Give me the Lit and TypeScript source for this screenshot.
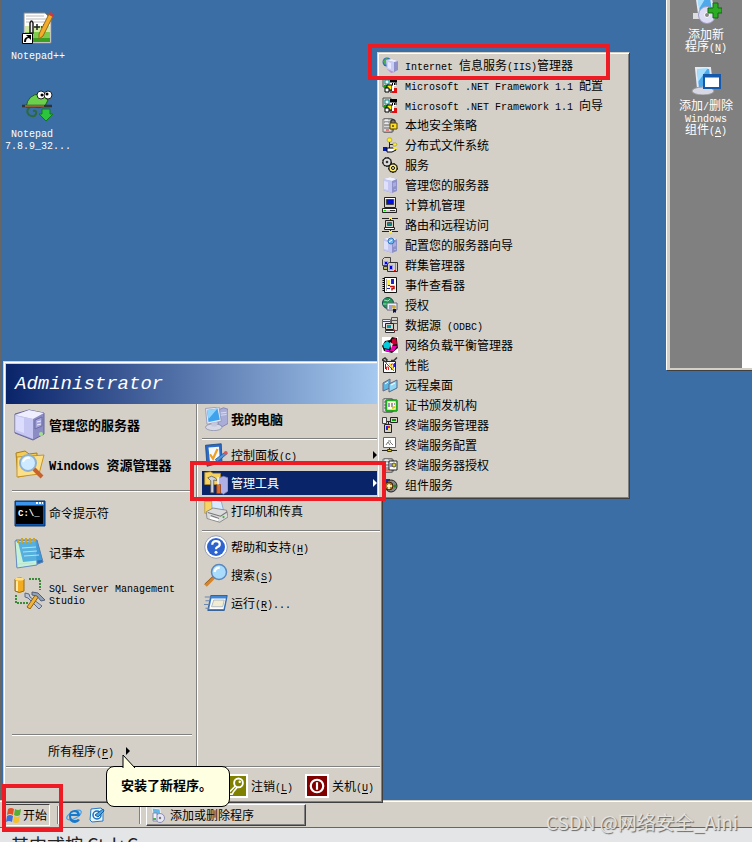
import { LitElement, html, svg, css, nothing, TemplateResult, SVGTemplateResult } from "lit";
import { customElement, property } from "lit/decorators.js";

/** Latin runs are set smaller than Chinese ones; "&" marks the underlined shortcut letter. */
function mixed(text: string): TemplateResult[] {
  return text.split(/([\x20-\x7e]+)/).filter(Boolean).map((run) => {
    if (!/^[\x20-\x7e]+$/.test(run)) return html`${run}`;
    const [head, tail] = run.split("&");
    return tail === undefined
      ? html`<span class="latin">${run}</span>`
      : html`<span class="latin">${head}<u>${tail[0]}</u>${tail.slice(1)}</span>`;
  });
}

const textStyles = css`
  .latin { font-family: "Liberation Mono", monospace; font-size: var(--latin, 10px); line-height: 0; white-space: pre; }
  u { text-decoration: underline; text-underline-offset: 2px; }
  button {
    font: inherit; color: inherit; background: none; border: 0; margin: 0; padding: 0;
    text-align: left; display: flex; align-items: center;
  }
  svg { display: block; flex: none; }
`;

type Art = SVGTemplateResult;

const tower = svg`
  <path d="M1 2 8 0l7 2v12l-5 2-9-3z" fill="#8f92c8"/>
  <path d="M1 2 10 4v12L1 13Z" fill="#c3c6f0"/><path d="M1 2 8 0l7 2-5 2Z" fill="#eef0ff"/>
  <path d="M2 4l4 1v8l-4-1z" fill="#dfe1fb"/><path d="M11 6l3-1v4l-3 1z" fill="#a9ace0"/><path d="M12 12h2v1h-2z" fill="#8fd08f"/>`;

const framework = svg`
  <path d="M1 1h8v9h-8z" fill="#d4d0c8" stroke="#555"/><path d="M3 3h4v4h-4z" fill="#eff" stroke="#088"/>
  <path d="M8 2h7v3h-7z" fill="#000"/><path d="M8 5h6v4h-6z" fill="#fff"/><path d="M8 5h6v3" fill="none" stroke="#000"/><path d="M10 6h1v2h-1zM12 6h1v2h-1z" fill="#000"/>
  <path d="M2 8h3v3h-3z" fill="#0a0"/><path d="M5 8h5v5h-5z" fill="#fe0" stroke="#000"/>
  <path d="M10 11h5v5h-5z" fill="#d11"/><path d="M3 11h4v4h-4z" fill="#fff" stroke="#000"/><path d="M10 9h2v5h-2z" fill="#fff"/><path d="M9 13v3" stroke="#000"/>`;

const cabinet = svg`
  <path d="M2 1h8l2 2v11l-2 2h-8z" fill="#777"/><path d="M1 2h9v13h-9z" fill="#d8d8d8" stroke="#777"/>
  <path d="M2 5h7M2 8h7M2 11h7" stroke="#666"/><path d="M3 3h3M3 6h3" stroke="#fff"/><path d="M4 13h3" stroke="#e22"/>`;

const small: Record<string, Art> = {
  iis: svg`<circle cx="5" cy="5" r="4.500" fill="#2765c8"/><path d="M1 4l3-3 3 1-2 3-1 3-2-1z" fill="#4caf50"/><path d="M5 12l4 4 4-1-3-4z" fill="#c58ad8"/><path d="M4 3l6-1 6 2v9l-4 2-7-3z" fill="#8f92c8"/><path d="M4 3l8 2v10l-7-3z" fill="#c9ccf4"/><path d="M4 3l6-1 6 2-4 1z" fill="#eef0ff"/><path d="M6 5l3 1v6l-3-1z" fill="#e6e8ff"/>`,
  net: framework,
  lock: svg`${cabinet}<path d="M9 6V4q2-3 4 0v2" fill="none" stroke="#333" stroke-width="1.500"/><path d="M8 6h7v6h-7z" fill="#fd2" stroke="#554400"/><path d="M11 8v2" stroke="#000"/>`,
  dfs: svg`<path d="M7.500 4v9M8 7.500h4M8 11.500h4" fill="none" stroke="#222"/><path d="M6 1h3l1 2-1 2H6L5 3zM11 6h3l1 1-1 2h-3z" fill="#fe3" stroke="#880" stroke-width=".5"/><path d="M1 10h4v4h-4z" fill="#0018b8"/><path d="M5 11h8l1 2-4 2H5z" fill="#fff" stroke="#000"/><path d="M11 10h3l1 2-3 1z" fill="#fe3"/>`,
  gears: svg`<circle cx="5" cy="5" r="4.500" fill="#111" stroke="#111" stroke-dasharray="2 1"/><circle cx="5" cy="5" r="3.500" fill="#ddd"/><circle cx="5" cy="5" r="1.300" fill="#333"/><circle cx="11" cy="11" r="4.500" fill="#111" stroke="#111" stroke-dasharray="2 1"/><circle cx="11" cy="11" r="3.500" fill="#fe6"/><circle cx="11" cy="11" r="1.500" fill="#fff" stroke="#000"/>`,
  server: tower,
  computer: svg`<path d="M2.500 0.500h11v10h-11z" fill="#d4d0c8" stroke="#222"/><path d="M3 1.500h10" stroke="#fff"/><path d="M4.500 2.500h7v5h-7z" fill="#0010d8" stroke="#444"/><path d="M0.500 11.500h14v4h-14z" fill="#d4d0c8" stroke="#222"/><path d="M1 12.500h13" stroke="#fff"/><path d="M2 13.500h2" stroke="#0d0"/><path d="M8 13.500h5" stroke="#333"/>`,
  routing: svg`<path d="M0 1.500h16M0 14.500h16M8.500 0v4M8.500 11v4" stroke="#222"/><path d="M7 0h3v2h-3zM7 14h3v2h-3z" fill="#fe3"/><path d="M3.500 3.500h8v7h-8z" fill="#d4d0c8" stroke="#222"/><path d="M5.500 5.500h4v3h-4z" fill="#088" stroke="#555"/><path d="M2.500 10.500h10v2h-10z" fill="#fff" stroke="#222"/>`,
  configure: svg`${tower}<circle cx="9" cy="4" r="3" fill="#6fb6ee" stroke="#3a76bb"/><path d="M7 5l3-2" stroke="#fff"/>`,
  cluster: svg`<path d="M0.500 2.500l2-2h6v8h-8z" fill="#d4d0c8" stroke="#444"/><path d="M2.500 4.500h3v3h-3z" fill="#00d" stroke="#99f"/><path d="M1.500 9.500h6v3h-6z" fill="#bb6" stroke="#333"/><path d="M5.500 6.500l2-1h8v9h-10z" fill="#d4d0c8" stroke="#333"/><path d="M7.500 8.500h3v4h-3z" fill="#00d" stroke="#99f"/><path d="M13.500 6v8" stroke="#888"/><path d="M12 13.500h2" stroke="#e11"/>`,
  events: svg`<path d="M2.500 0.500h12v15h-12z" fill="#fff" stroke="#111"/><path d="M1.500 1v14" stroke="#000" stroke-width="2" stroke-dasharray="1 1"/><path d="M4.500 2v12" stroke="#aaa"/><path d="M5 3h3v6h-3z" fill="#fe3"/><path d="M9 2h3v5h-3z" fill="#22c"/><path d="M8 9.500h4v2h-2v2" fill="none" stroke="#b11" stroke-width="1.500"/><path d="M5 11.500h3M6 8.500h2" stroke="#22c"/>`,
  license: svg`<circle cx="6" cy="6" r="5.500" fill="#1c9b50" stroke="#145"/><path d="M2 3l4 1 2-2M1 7h5l3 3" stroke="#9fe0c0" fill="none"/><path d="M5 6h10v7h-10z" fill="#eef" stroke="#667"/><path d="M7 9h4M7 11h3" stroke="#55a"/><circle cx="12" cy="10" r="2" fill="#ca3"/><path d="M11 12h3v4l-1-1-2 1z" fill="#115"/>`,
  odbc: svg`<path d="M0.500 2.500h8v8h-8z" fill="#eef" stroke="#666"/><path d="M1 4.500h7" stroke="#24c"/><path d="M9.500 0.500h6v13h-6z" fill="#d4d0c8" stroke="#555"/><path d="M10 3.500h5M10 6.500h5" stroke="#555"/><path d="M3.500 6.500h8v6h-8z" fill="#d4d0c8" stroke="#222"/><path d="M5 8h4v3h-4z" fill="#09a"/><path d="M3.500 13.500h9v2h-9z" fill="#fff" stroke="#333"/><path d="M11 13h2" stroke="#e11"/>`,
  nlb: svg`<path d="M0 0h16v16h-16z" fill="#fff"/><path d="M3 4l5-1 2-3 5 1 1 10-6 5-8-2-2-5z" fill="#111"/><path d="M1 7l4-3 4 3-2 5-5-1z" fill="#0cd"/><path d="M10 2l4-1 1 6-5 1z" fill="#c03"/><path d="M10 9h5l-3 5-4 0z" fill="#e0a"/><path d="M8 5l3 2-2 5z" fill="#ddd"/><path d="M3 12l4 1 1 2-5-1z" fill="#f0e"/>`,
  perf: svg`<path d="M1.500 4.500h12v11h-12z" fill="#fff" stroke="#222"/><path d="M0 3l3-2 2 2-1 2zM9 3.500h3l3-3" fill="none" stroke="#333" stroke-width="1.500"/><path d="M4.500 13v-3h2v3M9.500 13V7h2v6" stroke="#e22" fill="none"/><path d="M4 6l8 8" stroke="#111" stroke-width=".7"/><path d="M7 6l5 7" stroke="#fd0" stroke-width="1.500"/><path d="M3.500 12V7M12.500 10V6" stroke="#22d"/>`,
  remote: svg`<path d="M1 6l7-4v9l-7 3z" fill="#5cb6e0" stroke="#668"/><path d="M7 7l8-4v8l-8 4z" fill="#8fd6f4" stroke="#568"/><path d="M3 7l3-2M9 8l4-2" stroke="#fff"/>`,
  ca: svg`${cabinet}<path d="M4 3h11v11h-11z" fill="#ffd" stroke="#151"/><path d="M4.500 3.500h10v10h-10z" fill="none" stroke="#2a2" stroke-width="1.500"/><path d="M6 7h7M6 9h6" stroke="#33a" stroke-dasharray="2 1"/><path d="M10 11l3-1" stroke="#dc0" stroke-width="2"/>`,
  tsmanager: svg`<path d="M0.500 0.500h4v6h-4z" fill="#eee" stroke="#444"/><path d="M8.500 0.500h7v5h-7z" fill="#d4d0c8" stroke="#222"/><path d="M10 2h4v2h-4z" fill="#090"/><path d="M5 4.500h3M6.500 5v4" stroke="#222" fill="none"/><path d="M2.500 7.500h7v8h-7z" fill="#d4d0c8" stroke="#222"/><path d="M4 9h2v4h-2z" fill="#22d"/><path d="M6 9h2v2h-2z" fill="#e22"/><path d="M6 11h2v2h-2z" fill="#fe0"/>`,
  tsconfig: svg`<path d="M1.500 0.500h12v10h-12z" fill="#fff" stroke="#666"/><path d="M4 8l2-3 2 3M8 5l3 3M6 4h3" stroke="#777" fill="none"/><path d="M0 13.500h15M7.500 11v2" stroke="#222"/><path d="M5.500 12.500h4v2h-4z" fill="#dc3" stroke="#333"/>`,
  tslicense: svg`${cabinet}<path d="M7 4h8v9h-8z" fill="#fff" stroke="#222"/><path d="M8 7h3M8 9h3" stroke="#22a"/><circle cx="12" cy="8" r="2" fill="#dc3" stroke="#553"/>`,
  com: svg`<path d="M2 2h6v5h-6z" fill="#22b"/><circle cx="9" cy="9" r="6" fill="#888" stroke="#222"/><circle cx="7" cy="9" r="4" fill="#a72" stroke="#420"/><path d="M5 9h5M7 7v5" stroke="#ffd" stroke-width="1.500"/><circle cx="13" cy="9" r="1.500" fill="#282"/>`,
  flag: svg`<path d="M2 2q3-2 6 0L7 8Q4 6 1 8z" fill="#e2502a"/><path d="M9 2q3 2 6 0l-1 6q-3 2-6 0z" fill="#58ad35"/><path d="M1 9q3-2 6 0l-1 6q-3-2-6 0z" fill="#3f6fd8"/><path d="M8 9q3 2 6 0l-1 6q-3 2-6 0z" fill="#f4c02c"/>`,
  ie: svg`<ellipse cx="8" cy="8" rx="8" ry="3.500" transform="rotate(-28 8 8)" fill="none" stroke="#4aa0e8" stroke-width="1.200"/><path d="M14 9H5q0 4 4 4 2 0 3-1l2 1q-2 3-5 3-6 0-6-7 0-6 6-6 5 0 5 6zM5 7h6q0-2-3-2t-3 2z" fill="#1878cc"/>`,
  mail: svg`<path d="M2 2l10-1 2 2v11l-11 1-2-2z" fill="#e8f4ff" stroke="#2878c0"/><circle cx="8" cy="8" r="4" fill="none" stroke="#1870c4" stroke-width="1.500"/><path d="M6 8l3 2 6-6-1-2z" fill="#48a4e8" stroke="#14609c"/>`,
  addremove: svg`<path d="M2 1l8 1 1 7-7 2z" fill="#5fb8ec" stroke="#eee"/><circle cx="10" cy="11" r="4.500" fill="#e6e6f6" stroke="#8c8cb4"/><circle cx="10" cy="11" r="1.200" fill="#777"/><path d="M3 6h4v8h-4z" fill="#f0f0ff" stroke="#88a"/><path d="M3 11h3v2h-3z" fill="#4b4"/>`,
};

const shortcutArrow = svg`<path d="M0.500 21.500h10v10h-10z" fill="#fff" stroke="#000"/><path d="M2 30q0-5 4-5l-2-2h5v5l-2-2q-3 0-3 4z" fill="#000"/>`;

const pcArt = svg`
  <path d="M19 4l7-3 6 2v19l-7 4-6-3z" fill="#a9add8" stroke="#7478ac"/><path d="M22 8l8-1M22 11l8-1" stroke="#e8eaff"/>
  <path d="M2 2 20 0l3 19-19 4z" fill="#e3e6f4" stroke="#8890b4"/><path d="M4 4 18 2l3 15-15 3z" fill="#3fa2ec"/><path d="M4 4 18 2 6 16z" fill="#8fd3fb"/>
  <ellipse cx="13" cy="27" rx="11" ry="4.500" fill="#d6d8e6" stroke="#888ca8"/><path d="M10 21l7-1v6h-7z" fill="#c4c8dc"/>`;

const big: Record<string, Art> = {
  notepadpp: svg`<path d="M2 1h21l6 6v24H2z" fill="#fff" stroke="#888"/><path d="M3 14h25v16H3z" fill="#cfeaa0"/><path d="M3 20h25v10H3z" fill="#7fcc4c"/><path d="M3 26h25v4H3z" fill="#3aa022"/><path d="M4 4h18M4 7h20M4 10h22" stroke="#bbb"/><path d="M8 21V11q1.500-4 3 0v10z" fill="#eee" stroke="#222" stroke-width="1.500"/><path d="M12 15h6M15 12v6M19 15h6M22 12v6" stroke="#222" stroke-width="1.500"/><path d="M27 2l4 2-10 20-4 3v-5z" fill="#f3ad2a" stroke="#94661a"/><path d="M28 0l4 2-1 3-4-2z" fill="#c33c4a"/>${shortcutArrow}`,
  chameleon: svg`<path d="M4 17Q6 4 18 4l8 6-3 6q-6 3-12 1z" fill="#6bd04c" stroke="#1b5d18"/><path d="M8 17q-5 4-1 8 5 3 7-1 1-4-3-3" fill="none" stroke="#2d6a3a" stroke-width="2"/><circle cx="19" cy="5" r="4" fill="#fff" stroke="#222"/><circle cx="26" cy="5" r="4" fill="#fff" stroke="#222"/><circle cx="20" cy="5" r="1.500"/><circle cx="25" cy="4" r="1.500"/><path d="M0 16h30" stroke="#333" stroke-width="2.500"/><path d="M3 16h19" stroke="#b07040" stroke-width="1.500"/><path d="M20 19h8v5h3l-7 7-7-7h3z" fill="#2cc43c" stroke="#0f7a1d"/>`,
  server: svg`<path d="M1 5 15 1l15 3v21L19 31 1 24z" fill="#8c8cc4" stroke="#66669a"/><path d="M1 6l18 4v20L1 23z" fill="#c6c6f2"/><path d="M1 6 15 1l15 3-11 6z" fill="#eeeeff"/><path d="M2 7l8 2v15l-8-3z" fill="#dcdcfc"/><path d="M21 11l7-3v9l-7 3z" fill="#a5a5dc" stroke="#6d6da4"/><path d="M23 13l4-1M23 16l4-1" stroke="#eef"/><circle cx="27" cy="25" r="2" fill="#a3e28c"/>`,
  explorer: svg`<path d="M2 4l9-2 4 3 8-1v20l-19 4z" fill="#f4cc55" stroke="#a97c16"/><path d="M3 8l27-2-5 19-22 3z" fill="#fbe089" stroke="#c49424"/><circle cx="14" cy="14" r="8" fill="#cdeafe" stroke="#8fb0d0" stroke-width="2"/><path d="M9 13q2-5 7-4" stroke="#fff" stroke-width="2" fill="none"/><path d="M20 20l8 8" stroke="#c9622a" stroke-width="4"/>`,
  cmd: svg`<path d="M1 4h30v25H1z" fill="#1057ac" stroke="#07346e"/><path d="M2 5h28v3H2z" fill="#3d94ee"/><path d="M22 6h2M25 6h2M28 6h1" stroke="#fff" stroke-width="2"/><path d="M2 9h27v18H2z" fill="#000"/><text x="4" y="19" class="prompt">C:\\_</text>`,
  notepad: svg`<path d="M2 3h21l6 22-8 3-18 2z" fill="#2d6fb8" stroke="#5a80b0"/><path d="M1 4l21-1 1 25-20 3z" fill="#c6f1d4" stroke="#6a8cc4"/><path d="M4 5l19-1 5 19-19 2z" fill="#42a4de" opacity=".85"/><path d="M8 11l14-1M9 15l14-1M10 19l15-1M4 27l16-1" stroke="#b7e2f6"/><path d="M4 2v4M8 1v5M12 1v5M16 1v5M20 1v4" stroke="#c9a52c" stroke-width="2"/>`,
  ssms: svg`<path d="M1 2q5-3 9 0v12q-5 3-9 0z" fill="#f1ac22" stroke="#9c6a10"/><path d="M3 4v10" stroke="#ffe9a8" stroke-width="2"/><ellipse cx="5.500" cy="2" rx="4.500" ry="1.500" fill="#ffe089"/><path d="M15 2h11v11M2 18v8h12" fill="none" stroke="#3a8a3a" stroke-width="2" stroke-dasharray="2 1"/><path d="M11 16l4 1 1 3 12 9-3 3-11-11-3-1z" fill="#b9c4d6" stroke="#5d6980"/><path d="M22 17l-9 13 3 2 9-13z" fill="#f0b43c" stroke="#8a6012"/><path d="M18 15l6 1 7 7-4 1-4-5-5-1z" fill="#94a2b8" stroke="#525f78"/>`,
  mypc: pcArt,
  control: svg`<path d="M2 3l21-2 1 25-20 5z" fill="#2c6cc8" stroke="#164078"/><path d="M6 6l14-1 1 17-13 4z" fill="#f4f8ff"/><path d="M8 15l4 6 6-13" fill="none" stroke="#eda023" stroke-width="3"/><path d="M15 22l12-9 4 1-13 11z" fill="#4f93dc" stroke="#1c5594"/><circle cx="29" cy="13" r="2.500" fill="#d55"/>`,
  tools: svg`<path d="M1 2l8-1 3 2h10v15H1z" fill="#f7d25e" stroke="#b68b1c"/><path d="M20 9l6-2 6 2v18l-6 4-6-3z" fill="#aeb0e6" stroke="#6c70aa"/><path d="M5 9q5-4 10 0l3 4-5-1v17H9V13z" fill="#cfd4de" stroke="#555"/><path d="M17 18h5v12h-5z" fill="#e26a2c" stroke="#8e3d11"/><path d="M19 8v10" stroke="#eee" stroke-width="3"/>`,
  printer: svg`<path d="M1 3h11v16H1z" fill="#f6d565" stroke="#b8942c"/><path d="M10 1l13 2 3 12H11z" fill="#d7ebff" stroke="#7b9cc2"/><path d="M3 17l9-5 18 3 2 9-11 7-17-5z" fill="#dcdcdc" stroke="#777"/><path d="M5 18l17 5 9-6M9 22l11 4" stroke="#777" stroke-width="1.500" fill="none"/><path d="M8 25l11 3" stroke="#fff" stroke-width="3"/><circle cx="26" cy="24" r="1.500" fill="#3b3"/>`,
  help: svg`<circle cx="16" cy="16" r="15" fill="#fff" stroke="#7886a8"/><circle cx="16" cy="16" r="12" fill="#2c63cf"/><path d="M11 13q0-5 5-5t5 4q0 3-3 4-2 1-2 3" fill="none" stroke="#fff" stroke-width="3"/><circle cx="16" cy="23" r="2" fill="#fff"/>`,
  search: svg`<path d="M2 30 14 18" stroke="#d4842c" stroke-width="5"/><path d="M1 28 13 17" stroke="#8a5a20"/><circle cx="20" cy="12" r="10" fill="#a9dcfc" stroke="#5b87bd" stroke-width="2"/><path d="M14 12q1-6 7-6" fill="none" stroke="#fff" stroke-width="3"/>`,
  run: svg`<path d="M9 6h22l-4 20H5z" fill="#3f86d4" stroke="#1d4c88"/><path d="M10 10h19l-3 14H7z" fill="#fff"/><path d="M13 12h14l-2 9H10z" fill="#f2ecd0" stroke="#9ab"/><path d="M1 8h8M2 13h6M0 18h7M2 23h5" stroke="#6a86ac" stroke-width="1.500"/>`,
  key: svg`<path d="M0 0h32v32H0z" fill="#808000"/><circle cx="20" cy="11" r="7" fill="none" stroke="#fff" stroke-width="3"/><circle cx="22" cy="9" r="2" fill="#fff"/><path d="M15 16 5 26v3h5l2-4 6-7" fill="none" stroke="#fff" stroke-width="2.500"/>`,
  power: svg`<path d="M0 0h32v32H0z" fill="#800000"/><circle cx="16" cy="16" r="10" fill="none" stroke="#fff" stroke-width="3.500"/><path d="M16 10v12" stroke="#fff" stroke-width="3.500"/>`,
  addnew: svg`<path d="M6 0h14l3 18-14 4z" fill="#4ea9ea" stroke="#e6eaf4" stroke-width="2"/><path d="M7 3l11-1-9 15z" fill="#a5defc"/><path d="M3 21h14v6H3z" fill="#ddd"/><circle cx="17" cy="23" r="8.500" fill="#dcdcf4" stroke="#9c9cc4"/><path d="M17 23l5-7 3 4z" fill="#fff"/><circle cx="17" cy="23" r="2.500" fill="#888" stroke="#fff"/><path d="M18 16h5v-5h5v5h4v5h-4v5h-5v-5h-5z" fill="#2cac24" stroke="#11690e"/>`,
  components: svg`<path d="M6 5h14l2 17-14 4z" fill="#4ea9ea" stroke="#e6eaf4" stroke-width="2"/><path d="M7 6l11-1-10 14z" fill="#a5defc"/><ellipse cx="13" cy="28" rx="11" ry="4" fill="#d8d8e4" stroke="#999"/><path d="M14 12h16v13H14z" fill="#fff" stroke="#1559ac" stroke-width="2"/><path d="M14 13h16" stroke="#1559ac" stroke-width="3"/>`,
};

const icon16 = (name: string) => html`<svg width="16" height="16" viewBox="0 0 16 16" aria-hidden="true">${small[name]}</svg>`;
const icon = (name: string, size: number) => html`<svg width=${size} height=${size} viewBox="0 0 32 32" aria-hidden="true">${big[name]}</svg>`;
const arrow = html`<svg class="arrow" width="4" height="8" viewBox="0 0 4 8" aria-hidden="true"><path d="M0 0l4 4-4 4z" fill="currentColor"/></svg>`;

@customElement("desktop-icon")
export class DesktopIcon extends LitElement {
  @property() name = "";
  @property({ attribute: false }) lines: string[] = [];

  static styles = [textStyles, css`
    :host { display: block; color: #fff; font-size: 12px; line-height: 12px; }
    button { flex-direction: column; gap: 4px; width: 100%; text-align: center; white-space: nowrap; }
    .line { display: block; }
  `];

  render() {
    return html`<button>${icon(this.name, 32)}<span>${this.lines.map((l) => html`<span class="line">${mixed(l)}</span>`)}</span></button>`;
  }
}

@customElement("tools-menu")
export class ToolsMenu extends LitElement {
  static styles = [textStyles, css`
    :host {
      display: block; box-sizing: border-box; padding: 2px 2px 3px; font-size: 12px; background: #d4d0c8;
      border: 1px solid; border-color: #d4d0c8 #404040 #404040 #d4d0c8;
      box-shadow: inset 1px 1px #fff, inset -1px -1px #808080;
    }
    button { width: 100%; height: 20px; gap: 7px; padding-left: 2px; white-space: nowrap; }
  `];

  items: [string, string][] = [
    ["iis", "Internet 信息服务(IIS)管理器"],
    ["net", "Microsoft .NET Framework 1.1 配置"],
    ["net", "Microsoft .NET Framework 1.1 向导"],
    ["lock", "本地安全策略"],
    ["dfs", "分布式文件系统"],
    ["gears", "服务"],
    ["server", "管理您的服务器"],
    ["computer", "计算机管理"],
    ["routing", "路由和远程访问"],
    ["configure", "配置您的服务器向导"],
    ["cluster", "群集管理器"],
    ["events", "事件查看器"],
    ["license", "授权"],
    ["odbc", "数据源 (ODBC)"],
    ["nlb", "网络负载平衡管理器"],
    ["perf", "性能"],
    ["remote", "远程桌面"],
    ["ca", "证书颁发机构"],
    ["tsmanager", "终端服务管理器"],
    ["tsconfig", "终端服务配置"],
    ["tslicense", "终端服务器授权"],
    ["com", "组件服务"],
  ];

  render() {
    return this.items.map(([name, text]) => html`<button role="menuitem">${icon16(name)}<span>${mixed(text)}</span></button>`);
  }
}

@customElement("start-menu")
export class StartMenu extends LitElement {
  static styles = [textStyles, css`
    :host {
      display: flex; flex-direction: column; box-sizing: border-box; padding: 2px;
      background: #d4d0c8; border: 1px solid; border-color: #d4d0c8 #404040 #404040 #d4d0c8;
      box-shadow: inset 1px 1px #fff, inset -1px -1px #808080; font-size: 12px; line-height: 12px;
    }
    header {
      height: 40px; display: flex; align-items: center; padding-left: 9px; color: #fff;
      background: linear-gradient(90deg, #0a246a, #a6caf0);
      font: italic 19px/24px "Liberation Mono", monospace;
    }
    .columns { flex: 1; display: grid; grid-template-columns: 191px 1fr; }
    .left, .right { display: flex; flex-direction: column; padding-top: 1px; }
    .left { border-right: 1px solid #808080; padding-left: 6px; padding-right: 4px; }
    .right { border-left: 1px solid #fff; padding-left: 4px; }
    .left button { height: 40px; padding-left: 2px; gap: 3px; }
    .right button { height: 28px; padding: 2px 3px 2px 2px; gap: 3px; }
    .right .chosen { color: #fff; background: linear-gradient(#0a246a, #0a246a) 0 2px / 100% 24px no-repeat; }
    .right .arrow { margin-left: auto; }
    .strong { font-size: 13px; font-weight: bold; --latin: 12px; }
    hr { width: 100%; margin: 5px 0 1px; border: 0; border-top: 1px solid #808080; border-bottom: 1px solid #fff; }
    .bottom { margin: auto 0 0; }
    .left .all { height: 30px; gap: 12px; padding-left: 36px; }
    footer {
      height: 34px; box-sizing: border-box; display: flex; align-items: center; justify-content: flex-end; gap: 12px;
      padding: 4px 6px 0 0; border-top: 1px solid #808080; box-shadow: inset 0 1px #fff;
    }
    footer button { gap: 3px; }
    footer svg { border: 2px solid #fff; }
    .prompt { font: bold 9px "Liberation Mono", monospace; fill: #fff; }
  `];

  left(name: string, text: string, second = "", strong = false) {
    return html`<button class=${strong ? "strong" : ""}>${icon(name, 32)}<span>${mixed(text)}${second ? html`<br>${mixed(second)}` : nothing}</span></button>`;
  }

  right(name: string, text: string, cls = "", more = false) {
    return html`<button class=${cls}>${icon(name, 24)}<span>${mixed(text)}</span>${more ? arrow : nothing}</button>`;
  }

  render() {
    return html`
      <header>Administrator</header>
      <div class="columns">
        <div class="left">
          ${this.left("server", "管理您的服务器", "", true)}
          ${this.left("explorer", "Windows 资源管理器", "", true)}
          <hr>
          ${this.left("cmd", "命令提示符")}
          ${this.left("notepad", "记事本")}
          ${this.left("ssms", "SQL Server Management", "Studio")}
          <hr class="bottom">
          <button class="all"><span>${mixed("所有程序(&P)")}</span>${arrow}</button>
        </div>
        <div class="right">
          ${this.right("mypc", "我的电脑", "strong")}
          <hr>
          ${this.right("control", "控制面板(&C)", "", true)}
          ${this.right("tools", "管理工具", "chosen", true)}
          ${this.right("printer", "打印机和传真")}
          <hr>
          ${this.right("help", "帮助和支持(&H)")}
          ${this.right("search", "搜索(&S)")}
          ${this.right("run", "运行(&R)...")}
        </div>
      </div>
      <footer>
        <button>${icon("key", 20)}<span>${mixed("注销(&L)")}</span></button>
        <button>${icon("power", 20)}<span>${mixed("关机(&U)")}</span></button>
      </footer>`;
  }
}

@customElement("app-root")
export class AppRoot extends LitElement {
  static styles = [textStyles, css`
    :host {
      display: flex; flex-direction: column; position: relative; box-sizing: border-box; overflow: hidden;
      min-height: 100vh; background: #3a6ea5; color: #000; font: 12px/14px "Noto Sans CJK SC", sans-serif;
    }
    .desktop { flex: 1; border-left: 1px solid #666; }
    .icons { display: flex; flex-direction: column; gap: 30px; width: 74px; padding-top: 12px; }
    tools-menu { position: absolute; left: 377px; top: 52px; width: 253px; }
    start-menu { position: absolute; left: 3px; bottom: 39px; width: 380px; height: 442px; }
    .programs {
      position: absolute; top: 0; left: 667px; right: 0; height: 368px; display: flex;
      border: solid #d4d0c8; border-width: 0 0 2px 3px; background: #fff; box-shadow: -1px 0 #fff, 0 1px #404040;
    }
    .places { width: 72px; background: #808080; display: flex; flex-direction: column; gap: 11px; margin-right: 10px; }
    .places :first-child { margin-top: -8px; }
    .taskbar {
      height: 28px; box-sizing: border-box; display: flex; align-items: center; padding: 2px 3px 0; background: #d4d0c8;
      box-shadow: inset 0 1px #d4d0c8, inset 0 2px #fff; border-bottom: 1px solid #666;
    }
    .taskbar button { height: 22px; box-sizing: border-box; white-space: nowrap; }
    .taskbar .start { width: 47px; gap: 1px; padding-left: 2px; border: 1px solid; border-color: #404040 #fff #fff #404040; }
    .taskbar .task {
      width: 160px; gap: 4px; padding-left: 3px; border: 1px solid; border-color: #fff #404040 #404040 #fff;
      box-shadow: inset -1px -1px #808080;
    }
    .quick { margin-right: 7px; }
    .grip { width: 0; height: 18px; margin: 0 7px; border-left: 1px solid #808080; border-right: 1px solid #fff; }
    .grip.last { margin: 0 5px 0 auto; }
    .tray { display: flex; align-items: center; width: 80px; }
    .page {
      height: 14px; box-sizing: border-box; background: #e4e5e7; color: #222; overflow: hidden; padding-top: 4px;
      font-size: 18px; line-height: 24px; white-space: nowrap;
    }
    .page p { margin: 0 0 0 -7px; }
    .balloon {
      position: absolute; left: 106px; bottom: 35px; width: 124px; height: 41px; box-sizing: border-box; padding: 0 0 4px 14px;
      display: flex; align-items: center; background: #ffffe1; border: 1px solid #000; border-radius: 8px; font-size: 13px; font-weight: bold;
    }
    .balloon svg { position: absolute; left: 14px; top: -13px; }
    .mark { position: absolute; box-sizing: border-box; border: 4px solid #ed1c24; pointer-events: none; }
    .mark-iis { left: 368px; top: 44px; width: 242px; height: 36px; }
    .mark-tools { left: 190px; bottom: 341px; width: 196px; height: 40px; }
    .mark-start { left: 2px; bottom: 10px; width: 61px; height: 48px; }
    .credit { position: absolute; right: 14px; bottom: 6px; font-size: 19px; line-height: 28px; color: #e4e2de; text-shadow: 1px 1px 1px #666; }
  `];

  render() {
    return html`
      <main class="desktop">
        <div class="icons">
          <desktop-icon name="notepadpp" .lines=${["Notepad++"]}></desktop-icon>
          <desktop-icon name="chameleon" .lines=${["Notepad  ", "7.8.9_32..."]}></desktop-icon>
        </div>
      </main>
      <section class="programs">
        <div class="places">
          <desktop-icon name="addnew" .lines=${["添加新", "程序(&N)"]}></desktop-icon>
          <desktop-icon name="components" .lines=${["添加/删除", "Windows", "组件(&A)"]}></desktop-icon>
        </div>
      </section>
      <nav class="taskbar">
        <button class="start">${icon16("flag")}<span>开始</span></button>
        <span class="grip"></span>
        <div class="tray">
          <button class="quick" aria-label="Internet Explorer">${icon16("ie")}</button>
          <button class="quick" aria-label="Outlook Express">${icon16("mail")}</button>
          <span class="grip last"></span>
        </div>
        <button class="task">${icon16("addremove")}<span>添加或删除程序</span></button>
      </nav>
      <footer class="page"><p>、其中式按 Ctrl+C</p></footer>
      <start-menu></start-menu>
      <tools-menu role="menu"></tools-menu>
      <div class="balloon" role="status">
        <svg width="16" height="14" viewBox="0 0 16 14" aria-hidden="true"><path d="M2 14V1L14 14" fill="#ffffe1" stroke="#000"/></svg>
        安装了新程序。
      </div>
      <div class="mark mark-iis"></div>
      <div class="mark mark-tools"></div>
      <div class="mark mark-start"></div>
      <div class="credit">CSDN @网络安全_Aini</div>`;
  }
}
